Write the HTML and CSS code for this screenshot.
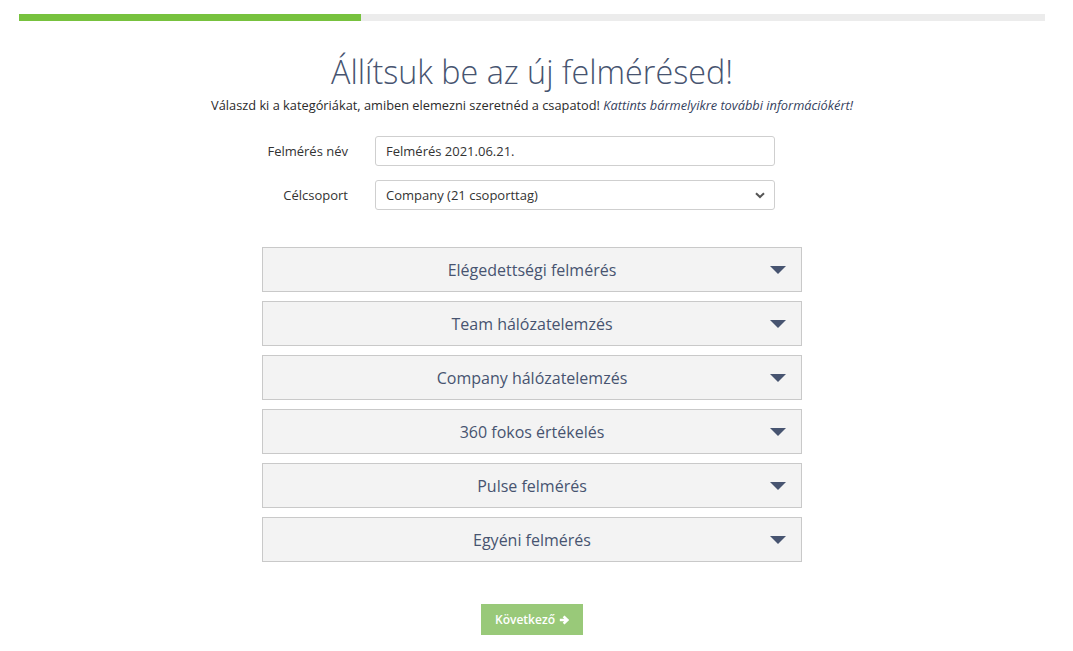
FILE: index.html
```html
<!DOCTYPE html>
<html lang="hu">
<head>
<meta charset="utf-8">
<title>Felmérés</title>
<link rel="stylesheet" href="styles.css">
</head>
<body>
<div class="page">
  <div class="progress"><div class="progress-fill" style="width:33.3%"></div></div>
  <h1 class="title">Állítsuk be az új felmérésed!</h1>
  <p class="subtitle">Válaszd ki a kategóriákat, amiben elemezni szeretnéd a csapatod! <em>Kattints bármelyikre további információkért!</em></p>
  <form class="form">
    <label class="label" for="name">Felmérés név</label>
    <input class="field" id="name" type="text" value="Felmérés 2021.06.21.">
    <label class="label" for="group">Célcsoport</label>
    <div class="select">
      <span>Company (21 csoporttag)</span>
      <svg class="chev" width="10" height="7" viewBox="0 0 10 7"><path d="M1 1.2 L5 5 L9 1.2" fill="none" stroke="#555" stroke-width="2"/></svg>
    </div>
  </form>
  <div class="accordion">
    <div class="acc-item"><span>Elégedettségi felmérés</span><span class="caret"></span></div>
    <div class="acc-item"><span>Team hálózatelemzés</span><span class="caret"></span></div>
    <div class="acc-item"><span>Company hálózatelemzés</span><span class="caret"></span></div>
    <div class="acc-item"><span>360 fokos értékelés</span><span class="caret"></span></div>
    <div class="acc-item"><span>Pulse felmérés</span><span class="caret"></span></div>
    <div class="acc-item"><span>Egyéni felmérés</span><span class="caret"></span></div>
  </div>
  <div class="actions">
    <button class="next" type="button">Következő <svg width="10" height="10" viewBox="0 0 10 10"><path d="M0.8 5 H8 M4.6 1.4 L8.4 5 L4.6 8.6" fill="none" stroke="#fff" stroke-width="2.6"/></svg></button>
  </div>
</div>
</body>
</html>
```

FILE: styles.css
```css
* { box-sizing: border-box; }
html, body { margin: 0; padding: 0; background: #fff; }
body { font-family: "Open Sans", "Noto Sans", sans-serif; color: #333; }
.page {
  width: 1026px;
  margin-left: 19px;
  padding-top: 14px;
  display: flex;
  flex-direction: column;
  align-items: center;
}
.progress {
  width: 100%;
  height: 7px;
  background: #ececec;
}
.progress-fill { height: 100%; background: #77c23e; }
.title {
  margin: 28px 0 0;
  font-size: 32.3px;
  font-weight: 300;
  line-height: 44px;
  color: #475470;
}
.subtitle {
  margin: 4px 0 0;
  font-size: 12.8px;
  line-height: 16px;
  color: #2b2b2b;
}
.subtitle em { color: #364260; }
.form {
  margin-top: 23px;
  width: 540px;
  display: grid;
  grid-template-columns: 113px 400px;
  row-gap: 14px;
  align-items: center;
}
.label {
  text-align: right;
  padding-right: 27px;
  font-size: 13px;
  color: #333;
}
.field, .select {
  height: 30px;
  border: 1px solid #cfcfcf;
  border-radius: 3px;
  padding: 0 10px;
  font-family: inherit;
  font-size: 13px;
  color: #333;
  background: #fff;
}
.select {
  display: flex;
  align-items: center;
  justify-content: space-between;
  padding-right: 9px;
}
.chev { display: block; }
.accordion {
  margin-top: 37px;
  width: 540px;
  display: flex;
  flex-direction: column;
  gap: 9px;
}
.acc-item {
  position: relative;
  height: 45px;
  background: #f3f3f3;
  border: 1px solid #c9c9c9;
  display: flex;
  align-items: center;
  justify-content: center;
  font-size: 16px;
  color: #475470;
}
.caret {
  position: absolute;
  right: 15px;
  top: 18px;
  width: 0;
  height: 0;
  border-left: 8px solid transparent;
  border-right: 8px solid transparent;
  border-top: 8px solid #475470;
}
.actions { margin-top: 42px; }
.next {
  width: 102px;
  height: 31px;
  border: 0;
  background: #99c979;
  color: #fff;
  font-family: inherit;
  font-size: 12px;
  font-weight: 600;
  display: flex;
  align-items: center;
  justify-content: center;
  gap: 4px;
  padding: 0;
}
```
